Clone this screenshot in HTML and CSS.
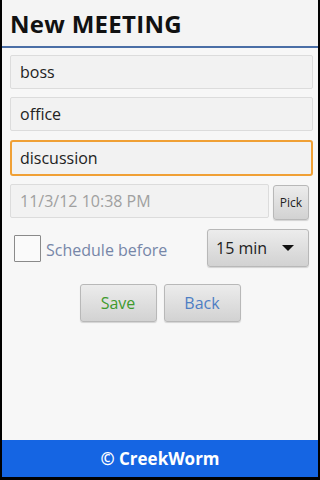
FILE: index.html
```html
<!DOCTYPE html>
<html>
<head>
<meta charset="utf-8">
<link rel="stylesheet" href="styles.css">
</head>
<body>
<div class="app">
  <header class="titlebar"><h1 class="title">New MEETING</h1></header>
  <main class="content">
    <div class="field">boss</div>
    <div class="field">office</div>
    <div class="field focused">discussion</div>
    <div class="date-row">
      <div class="field date">11/3/12 10:38 PM</div>
      <div class="btn pick">Pick</div>
    </div>
    <div class="sched-row">
      <div class="check"></div>
      <span class="sched-label">Schedule before</span>
      <div class="btn spinner"><span>15 min</span><span class="arrow"></span></div>
    </div>
    <div class="actions">
      <div class="btn action save">Save</div>
      <div class="btn action back">Back</div>
    </div>
  </main>
  <footer class="footer">© CreekWorm</footer>
</div>
</body>
</html>
```
FILE: styles.css
```css
html, body { margin: 0; padding: 0; background: #000; }
body { font-family: "Open Sans", "Noto Sans", "DejaVu Sans", sans-serif; }
.app {
  width: 316px; height: 478px; margin: 0 2px;
  background: #f7f7f7; display: flex; flex-direction: column;
}
.titlebar {
  height: 46px; background: #f4f4f4;
  border-bottom: 2px solid #4a6ea6; box-sizing: content-box;
  display: flex; align-items: center; padding-left: 8px;
}
.title { margin: 0; font-size: 24px; font-weight: 700; color: #111; letter-spacing: 0.3px; }
.content { padding: 7px 5px 0 8px; display: flex; flex-direction: column; }
.field {
  height: 34px; box-sizing: border-box; background: #f2f2f2;
  border: 1px solid #dcdcdc; border-radius: 2px;
  font-size: 16px; color: #222; padding-left: 9px;
  display: flex; align-items: center; margin-bottom: 8px;
}
.field.focused { height: 36px; border: 2px solid #f0a035; border-radius: 3px; padding-left: 8px; margin-top: 1px; }
.date-row { display: flex; align-items: flex-start; gap: 5px; margin-bottom: 0; }
.field.date { width: 259px; color: #a0a0a0; margin-bottom: 0; }
.btn {
  box-sizing: border-box; border: 1px solid #b8b8b8; border-radius: 3px;
  background: linear-gradient(#ececec, #d2d2d2);
  box-shadow: 0 1px 1px rgba(0,0,0,0.15);
  display: flex; align-items: center; justify-content: center; color: #222;
}
.pick { width: 36px; height: 35px; font-size: 12px; margin-top: 1px; margin-left: -1px; }
.sched-row { display: flex; align-items: center; margin-top: 9px; height: 38px; }
.check {
  width: 27px; height: 27px; box-sizing: border-box; margin-left: 4px;
  background: #fafafa; border: 1.5px solid #8a8a8a; border-radius: 1px;
}
.sched-label { font-size: 16px; color: #7686a8; margin-left: 5px; margin-top: 3px; }
.spinner {
  margin-left: auto; width: 102px; height: 38px; font-size: 16px;
  justify-content: space-between; padding: 0 14px 0 8px; margin-right: 4px;
}
.arrow { width: 0; height: 0; border-left: 6px solid transparent; border-right: 6px solid transparent; border-top: 6px solid #111; }
.actions { display: flex; justify-content: center; gap: 7px; margin-top: 17px; padding-right: 3px; }
.action { width: 77px; height: 38px; font-size: 16px; }
.save { color: #3f9a2e; }
.back { color: #4e7ec4; }
.footer {
  margin-top: auto; height: 37px; background: #1565e3;
  color: #fff; font-weight: 700; font-size: 17px;
  display: flex; align-items: center; justify-content: center;
  border-bottom: 1px solid #000; box-sizing: content-box;
}
```
